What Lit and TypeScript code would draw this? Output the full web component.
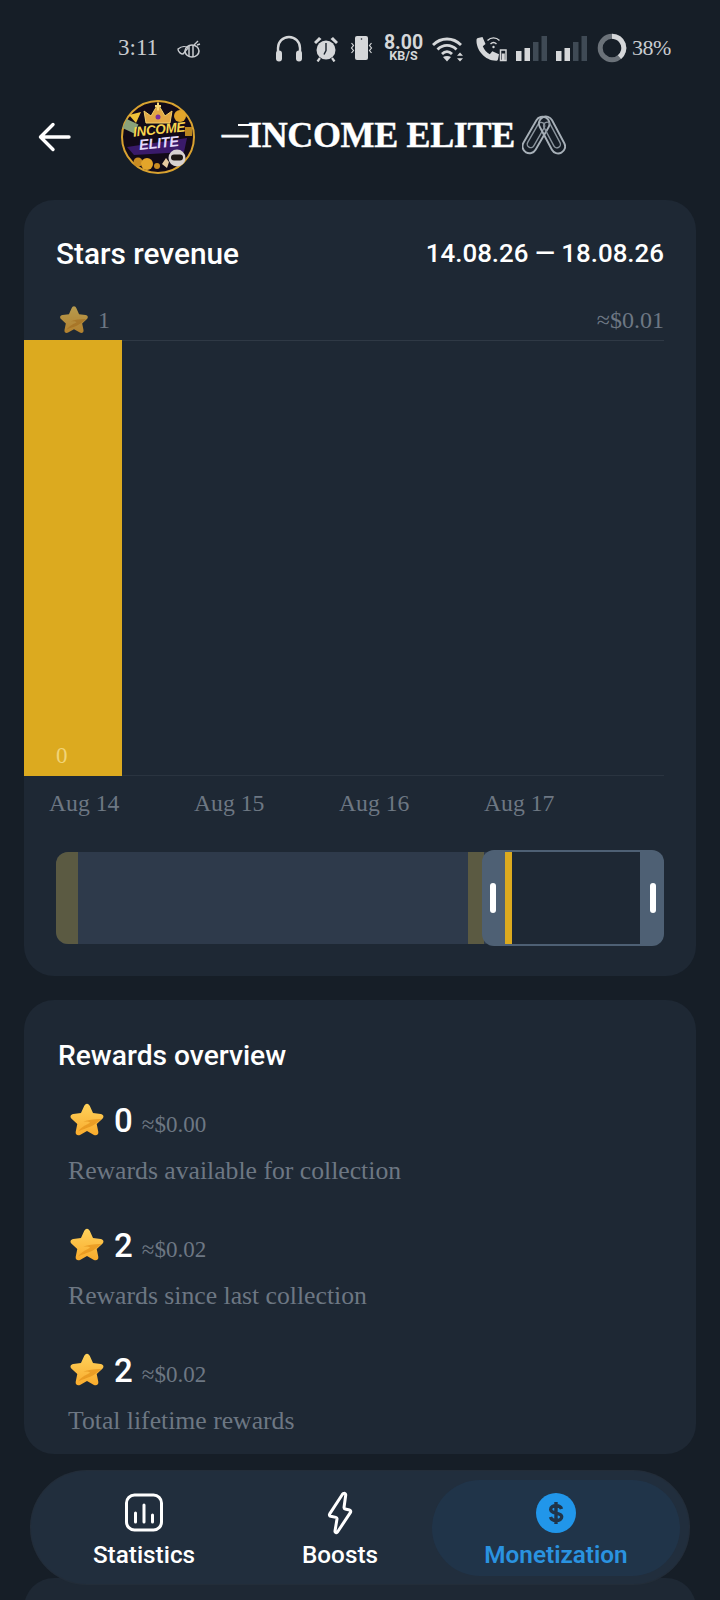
import { LitElement, html, css } from "lit";
import { customElement } from "lit/decorators.js";

const star = (cls: string) => html`<svg class=${cls} viewBox="0 0 36 36">
  <defs><linearGradient id="sg" x1="0" y1="0" x2="0" y2="1"><stop offset="0" stop-color="#ffd25c"/><stop offset="1" stop-color="#f9ab2c"/></linearGradient></defs>
  <path d="M18 2.500c1.300 0 2.100 1 2.700 2.300l3 6.600 7.300.9c2.600.4 3.400 2.800 1.600 4.600l-5.400 5 1.500 7.300c.5 2.600-1.800 4.200-4.100 2.900L18 28.400l-6.600 3.700c-2.300 1.300-4.600-.3-4.100-2.900l1.500-7.300-5.400-5c-1.800-1.800-1-4.200 1.600-4.600l7.300-.9 3-6.600c.6-1.300 1.400-2.300 2.700-2.300z" fill="url(#sg)"/>
  <path d="M9.500 29c3.500-5 9-7 11-8.200 1-.8-2-1.300-6-1.300 5-1.800 11-2.700 17-2.500-4 3.700-7 6-10.500 7.500-3.500 1.500-7.500 2.500-11.500 4.500z" fill="#e08a14" opacity=".6"/>
</svg>`;

const signal = html`<svg class="si sig" viewBox="0 0 31 26"><rect x="0" y="16" width="5.500" height="10" fill="#d5d7d9"/><rect x="8.500" y="13" width="5.500" height="13" fill="#d5d7d9"/><rect x="17" y="7" width="5.500" height="19" fill="#3f4a55"/><rect x="25.500" y="1" width="5.500" height="25" fill="#3f4a55"/></svg>`;

const statusIcons = html`
  <svg class="si hp" viewBox="0 0 28 27"><path d="M3 19v-6a11 11 0 0 1 22 0v6" fill="none" stroke="#d5d7d9" stroke-width="2.400"/><rect x="1" y="15.500" width="6" height="11" rx="3" fill="#d5d7d9"/><rect x="21" y="15.500" width="6" height="11" rx="3" fill="#d5d7d9"/></svg>
  <svg class="si al" viewBox="0 0 26 27"><circle cx="13" cy="15" r="9.500" fill="#d5d7d9"/><path d="M13 8v7.500l-2 4" fill="none" stroke="#17202a" stroke-width="1.400"/><path d="M1 7l5-5 2.500 2-5.500 5zM25 7l-5-5-2.500 2 5.500 5z" fill="#d5d7d9"/><path d="M7 23l-2.500 3.500M19 23l2.500 3.500" stroke="#d5d7d9" stroke-width="2.200"/></svg>
  <svg class="si vb" viewBox="0 0 25 27"><rect x="6" y="1" width="13" height="24" rx="2" fill="#d5d7d9"/><circle cx="12.500" cy="4" r=".8" fill="#17202a"/><path d="M2.500 8l2 2.500-2 2.500 2 2.500-2 2.500M22.500 8l-2 2.500 2 2.500-2 2.500 2 2.500" fill="none" stroke="#d5d7d9" stroke-width="1.200"/></svg>
  <span class="speed"><b>8.00</b><i>KB/S</i></span>
  <svg class="si wf" viewBox="0 0 34 27"><path d="M2 10c8-8 20-8 28 0M6.500 14.500c5.500-5.500 13.500-5.500 19 0M11 19c3-3 7-3 10 0" fill="none" stroke="#d5d7d9" stroke-width="2.800"/><path d="M16 26.500l-4-4.500c2.500-1.500 5.500-1.500 8 0z" fill="#d5d7d9"/><path d="M29 17.500l3 3.200h-6zM29 26.500l3-3.200h-6z" fill="#d5d7d9"/></svg>
  <svg class="si cl" viewBox="0 0 32 27"><path d="M3 3l4.500-1 3 7-2.700 2.300c1.500 3.700 3.700 6.200 7 8l2.500-3 6.700 2.900-1 5c-.3 1-1 1.500-2 1.500C10 25.700 1 15 1.500 5c0-1 .5-1.700 1.500-2z" fill="#d5d7d9"/><path d="M12.500 5.500c3.500-3.500 8.500-3.500 12 0M15.500 9c2-2 4-2 6 0" fill="none" stroke="#d5d7d9" stroke-width="1.400"/><circle cx="18.500" cy="12" r="1.200" fill="#d5d7d9"/><rect x="25.500" y="15" width="5.500" height="10.500" fill="none" stroke="#d5d7d9" stroke-width="1.500"/><rect x="26.800" y="18.500" width="3" height="6.500" fill="#d5d7d9"/></svg>
  ${signal}${signal}
  <svg class="si ring" viewBox="0 0 30 30"><circle cx="15" cy="15" r="11.800" fill="none" stroke="#6b7279" stroke-width="5"/><path d="M15 3.200A11.800 11.800 0 0 1 22.500 24.100" fill="none" stroke="#d5d7d9" stroke-width="5"/></svg>
`;

const avatar = html`<div class="avatar">
  <svg viewBox="0 0 74 74" class="av-art">
    <circle cx="37" cy="37" r="36" fill="#120a18" stroke="#d9a230" stroke-width="2"/>
    <path d="M25 23l-2-12 7 5 7-12 7 12 7-5-2 12z" fill="#e3a744" stroke="#f4cf6a" stroke-width="1"/>
    <path d="M37 2.500v8M34 6h6" stroke="#f7d777" stroke-width="2"/>
    <circle cx="37" cy="17" r="2.500" fill="#7d2f9e"/>
    <circle cx="59" cy="16" r="6" fill="#e3a52a"/>
    <path d="M8 15l12-3-5 11z" fill="#f0c238"/>
    <rect x="3" y="21" width="13" height="10" fill="#8aa27a" transform="rotate(25 9 26)"/>
    <rect x="64" y="27" width="7" height="9" fill="#b98620"/>
    <path d="M6 47l60-9-3 14-50 3z" fill="#3a1a6a"/>
    <circle cx="17" cy="62" r="4.500" fill="#c98c22"/><circle cx="26" cy="64" r="6" fill="#e3a52a"/><circle cx="36" cy="66" r="3" fill="#c98c22"/>
    <circle cx="56" cy="58" r="8.500" fill="#d8d2d0"/><rect x="50" y="54.500" width="12" height="6" rx="3" fill="#1d1714"/>
    <path d="M41 64l4-6 3 4-2 6z" fill="#e8c9a0"/>
  </svg>
  <span class="av-t1">INCOME</span><span class="av-t2">ELITE</span>
</div>`;

@customElement("app-root")
export class AppRoot extends LitElement {
  static styles = css`
    :host { display: block; width: 720px; height: 1600px; background: #161e27; overflow: hidden; position: relative; font-family: "Roboto", sans-serif; color: #fff; }
    .status { display: flex; align-items: center; height: 28px; padding: 34px 0 0 118px; font-family: "Liberation Serif", serif; color: #c9ccd0; }
    .time { font-size: 23px; width: 59px; }
    .bee { width: 24px; height: 18px; margin-top: 2px; flex: none; }
    .icons { display: flex; align-items: center; gap: 10px; margin-left: 74px; }
    .si { height: 27px; flex: none; display: block; }
    .hp { width: 28px; } .al { width: 26px; } .vb { width: 25px; } .wf { width: 34px; } .cl { width: 32px; } .sig { width: 31px; height: 26px; margin-left: -1px; }
    .ring { width: 30px; height: 30px; }
    .speed { display: flex; flex-direction: column; align-items: center; width: 39px; font-family: "Roboto", sans-serif; color: #d5d7d9; margin-right: -2px; }
    .speed b { font-size: 19.500px; font-weight: 700; height: 15px; line-height: 15px; display: block; }
    .speed i { font-size: 12.500px; font-style: normal; font-weight: 700; height: 11px; line-height: 11px; display: block; }
    .pct { font-size: 22px; margin-left: -5px; letter-spacing: -.5px; }
    .head { display: flex; align-items: center; height: 76px; margin-top: 35px; padding-left: 36px; }
    .back { width: 36px; height: 36px; flex: none; margin-top: 4px; }
    .avatar { width: 74px; height: 74px; margin: 4px 0 0 49px; position: relative; flex: none; }
    .av-art { width: 74px; height: 74px; display: block; }
    .av-t1, .av-t2 { position: absolute; font-family: "Liberation Sans", sans-serif; font-weight: 700; font-style: italic; line-height: 1; letter-spacing: -.3px; transform: rotate(-6deg); white-space: nowrap; }
    .av-t1 { left: 12px; top: 23px; font-size: 13.500px; color: #f7d44e; }
    .av-t2 { left: 18px; top: 36px; font-size: 14.500px; color: #e4dafc; }
    .name { font-family: "Liberation Serif", serif; font-weight: 700; font-size: 36px; letter-spacing: -.35px; margin-left: 27px; white-space: nowrap; -webkit-text-stroke: .4px #fff; }
    .dash { position: relative; display: inline-block; font-size: 26px; letter-spacing: 0; transform: translateY(-5px); -webkit-text-stroke: .8px #fff; }
    .dash::after { content: ""; position: absolute; left: 16px; width: 19px; top: 5px; height: 2px; background: #fff; }
    .clip { width: 44px; height: 42px; margin: 0 0 0 7px; flex: none; }
    .card { background: #1e2834; border-radius: 30px; margin: 0 24px; }
    .rev { margin-top: 27px; height: 776px; padding-top: 33px; box-sizing: border-box; }
    .rev-top { display: flex; justify-content: space-between; align-items: center; height: 40px; padding: 0 32px; font-weight: 500; }
    .rev-title { font-size: 29.800px; }
    .rev-range { font-size: 25.900px; }
    .scale { display: flex; align-items: center; justify-content: space-between; height: 32px; padding-bottom: 4px; margin: 31px 32px 0 34px; font-family: "Liberation Serif", serif; font-size: 24px; color: #6d7783; }
    .scale-l { display: flex; align-items: center; gap: 8px; }
    .star-dim { width: 32px; height: 32px; opacity: .68; display: block; }
    .chart { height: 436px; border-top: 1px solid #2f3945; border-bottom: 1px solid #2a3440; margin-right: 32px; box-sizing: border-box; position: relative; }
    .bar { width: 98px; margin-top: -1px; height: 436px; background: #dcaa1f; display: flex; align-items: flex-end; padding: 0 0 7px 32px; box-sizing: border-box; font-family: "Liberation Serif", serif; font-size: 23px; color: #f1d477; line-height: 26px; }
    .axis { display: flex; padding-left: 25px; height: 26px; margin-top: 14px; font-family: "Liberation Serif", serif; font-size: 23.700px; line-height: 26px; color: #6d7783; }
    .axis span { width: 145px; white-space: nowrap; }
    .slider { position: relative; margin: 36px 32px 0; height: 92px; background: #2e3a4b; border-radius: 12px; }
    .olive { position: absolute; top: 0; bottom: 0; background: #5b5a42; }
    .o1 { left: 0; width: 22px; border-radius: 12px 0 0 12px; }
    .o2 { left: 412px; width: 16px; }
    .win { position: absolute; left: 426px; right: 0; top: -2px; bottom: -2px; border-radius: 12px; overflow: hidden; background: #4e6074; }
    .grip { width: 6px; height: 30px; background: #fff; border-radius: 3px; position: absolute; top: 33px; }
    .g1 { left: 8px; } .g2 { right: 8px; }
    .inner { position: absolute; left: 23px; right: 24px; top: 2px; bottom: 2px; background: #1e2834; }
    .inner::before { content: ""; position: absolute; left: 0; top: 0; bottom: 0; width: 7px; background: #dcaa1f; }
    .rew { margin-top: 24px; height: 454px; padding: 38px 34px 0; box-sizing: border-box; overflow: hidden; }
    .rew-title { font-size: 28.200px; font-weight: 500; line-height: 36px; }
    .item { margin-left: 10px; }
    .item-top { display: flex; align-items: center; height: 42px; }
    .star { width: 38px; height: 38px; display: block; margin-right: 8px; }
    .val { font-size: 33px; font-weight: 500; margin-right: 9px; }
    .usd { font-family: "Liberation Serif", serif; font-size: 23px; color: #6d7783; padding-top: 9px; }
    .desc { font-family: "Liberation Serif", serif; font-size: 25.700px; line-height: 32px; color: #6d7783; margin-top: 14px; }
    .items { display: flex; flex-direction: column; gap: 37px; margin-top: 25px; }
    .under { position: absolute; left: 24px; right: 24px; top: 1578px; height: 60px; background: #1e2834; border-radius: 30px; }
    .nav { position: absolute; left: 31px; top: 1471px; width: 658px; height: 113px; border-radius: 56px; background: #212e3d; box-sizing: border-box; display: flex; padding: 9px 9px 8px 0; box-shadow: 0 0 0 1px #232d39; }
    .tab { flex: none; display: flex; flex-direction: column; align-items: center; font-weight: 500; font-size: 24.300px; padding-top: 11px; box-sizing: border-box; }
    .tab svg { width: 42px; height: 44px; display: block; }
    .tab span { line-height: 30px; margin-top: 5px; }
    .t1 { width: 226px; } .t2 { width: 175px; padding-right: 9px; }
    .t3 { width: 248px; background: #203449; border-radius: 48px; color: #2a93e0; font-weight: 600; }
  `;

  render() {
    return html`
      <div class="status">
        <span class="time">3:11</span>
        <svg class="bee" viewBox="0 0 24 18"><ellipse cx="15" cy="11" rx="7" ry="6" fill="none" stroke="#c9ccd0" stroke-width="1.600"/><path d="M1 9c4-3 8-3 10-1l-5 6C4 14 1 12 1 9z" fill="none" stroke="#c9ccd0" stroke-width="1.400"/><path d="M12 6v10M16 5v12" stroke="#c9ccd0" stroke-width="1.500"/><path d="M17 5l4-4M20 5l3-1" stroke="#c9ccd0" stroke-width="1.400"/></svg>
        <div class="icons">${statusIcons}<span class="pct">38%</span></div>
      </div>
      <div class="head">
        <svg class="back" viewBox="0 0 36 36"><path d="M5 18h28M17 5.500L4.500 18 17 30.500" fill="none" stroke="#fff" stroke-width="3.400" stroke-linecap="round" stroke-linejoin="round"/></svg>
        ${avatar}
        <span class="name"><span class="dash">—</span>INCOME ELITE</span>
        <svg class="clip" viewBox="0 0 44 42"><g fill="none" stroke="#a7b0b8" stroke-width="1.900"><g transform="rotate(30 14 21)"><rect x="7" y="1" width="14" height="40" rx="7"/><rect x="10.500" y="7" width="7" height="28" rx="3.500" stroke="#8a949d" stroke-width="1.400"/></g><g transform="rotate(-28 30 21)"><rect x="23" y="1" width="14" height="40" rx="7"/><rect x="26.500" y="7" width="7" height="28" rx="3.500" stroke="#8a949d" stroke-width="1.400"/></g></g></svg>
      </div>

      <section class="card rev">
        <div class="rev-top"><span class="rev-title">Stars revenue</span><span class="rev-range">14.08.26 — 18.08.26</span></div>
        <div class="scale"><span class="scale-l">${star("star-dim")}1</span><span>≈$0.01</span></div>
        <div class="chart"><div class="bar">0</div></div>
        <div class="axis"><span>Aug 14</span><span>Aug 15</span><span>Aug 16</span><span>Aug 17</span></div>
        <div class="slider">
          <div class="olive o1"></div><div class="olive o2"></div>
          <div class="win"><div class="inner"></div><div class="grip g1"></div><div class="grip g2"></div></div>
        </div>
      </section>

      <section class="card rew">
        <div class="rew-title">Rewards overview</div>
        <div class="items">
          ${[["0", "≈$0.00", "Rewards available for collection"], ["2", "≈$0.02", "Rewards since last collection"], ["2", "≈$0.02", "Total lifetime rewards"]].map(([v, u, d]) => html`
            <div class="item">
              <div class="item-top">${star("star")}<span class="val">${v}</span><span class="usd">${u}</span></div>
              <div class="desc">${d}</div>
            </div>`)}
        </div>
      </section>

      <div class="under"></div>
      <nav class="nav">
        <div class="tab t1"><svg viewBox="0 0 42 44"><rect x="3.500" y="4" width="35" height="35" rx="8" fill="none" stroke="#fff" stroke-width="3"/><path d="M12.500 22v9M21 14v17M29.500 24v7" stroke="#fff" stroke-width="3" stroke-linecap="round"/></svg><span>Statistics</span></div>
        <div class="tab t2"><svg viewBox="0 0 42 44"><path d="M24.500 2.500c1.200-.6 2.400.3 2.200 1.700L25 16.500c0 .8.400 1.300 1.200 1.500l4.300 1c1.200.3 1.500 1.400 1 2.400L18.500 41c-.8 1.300-2.700.7-2.500-.9L18 28c.1-.8-.3-1.400-1.100-1.600l-5.200-1.100c-1.200-.3-1.600-1.400-1-2.400L23.500 3.200c.3-.4.600-.6 1-.7z" fill="none" stroke="#fff" stroke-width="3" stroke-linejoin="round"/></svg><span>Boosts</span></div>
        <div class="tab t3"><svg viewBox="0 0 42 44"><circle cx="21" cy="22" r="20" fill="#2196ea"/><path d="M26.500 18c-.6-2.300-2.800-3.300-5.500-3.300-3.100 0-5.300 1.400-5.300 3.700 0 5 11 2.400 11 7.400 0 2.400-2.400 3.800-5.500 3.800-2.800 0-5-1.200-5.700-3.500M21 11v22" fill="none" stroke="#203449" stroke-width="3.400"/></svg><span>Monetization</span></div>
      </nav>
    `;
  }
}
